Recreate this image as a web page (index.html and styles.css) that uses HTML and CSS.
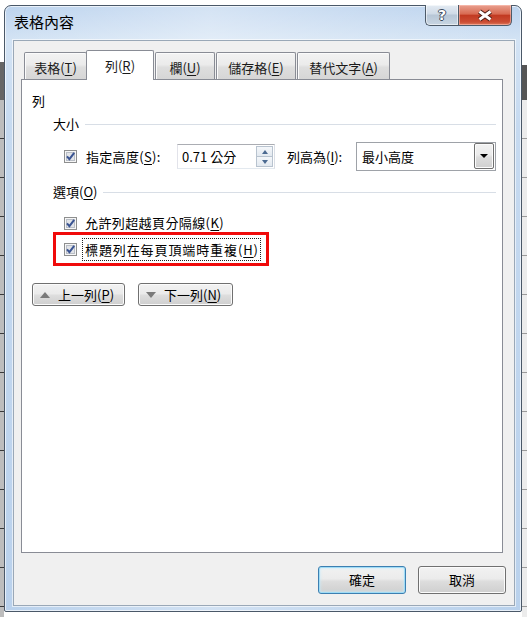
FILE: index.html
```html
<!DOCTYPE html>
<html lang="zh-Hant">
<head>
<meta charset="utf-8">
<title>表格內容</title>
<link rel="stylesheet" href="styles.css">
</head>
<body>
<div class="win">
  <div class="titlebar">
    <span class="title">表格內容</span>
    <div class="caps">
      <div class="cap help">?</div>
      <div class="cap close">
        <svg width="18" height="13" viewBox="0 0 18 13">
          <path d="M3.5 2.5 L14.5 10.5 M14.5 2.5 L3.5 10.5" stroke="#4b1e16" stroke-width="4.8" fill="none"/>
          <path d="M3.5 2.5 L14.5 10.5 M14.5 2.5 L3.5 10.5" stroke="#ffffff" stroke-width="2.8" fill="none"/>
        </svg>
      </div>
    </div>
  </div>
  <div class="client">
    <div class="tabs">
      <div class="tab t1">表格(<u>T</u>)</div>
      <div class="tab sel t2">列(<u>R</u>)</div>
      <div class="tab t3">欄(<u>U</u>)</div>
      <div class="tab t4">儲存格(<u>E</u>)</div>
      <div class="tab t5">替代文字(<u>A</u>)</div>
    </div>
    <div class="panel">
      <div class="ptitle">列</div>
      <div class="group">大小</div>
      <div class="row1">
        <svg class="cb" width="13" height="13" viewBox="0 0 13 13"><rect x="0.5" y="0.5" width="12" height="12" fill="#f6f6f6" stroke="#8e8f8f"/><rect x="2.5" y="2.5" width="8" height="8" fill="#e2e4e8" stroke="#b9bec6"/><path d="M3 6.3 L5.4 9.2 L10.2 2.8" fill="none" stroke="#3a5492" stroke-width="2"/></svg>
        <span class="lbl1">指定高度(<u>S</u>):</span>
        <div class="spin">
          <span>0.71 公分</span>
          <div class="spinbtns">
            <div class="sb"><i class="up"></i></div>
            <div class="sb"><i class="down"></i></div>
          </div>
        </div>
        <span class="lbl2">列高為(<u>I</u>):</span>
        <div class="combo">
          <span>最小高度</span>
          <div class="drop"><i></i></div>
        </div>
      </div>
      <div class="group g2">選項(<u>O</u>)</div>
      <div class="chkrow">
        <svg class="cb" width="13" height="13" viewBox="0 0 13 13"><rect x="0.5" y="0.5" width="12" height="12" fill="#f6f6f6" stroke="#8e8f8f"/><rect x="2.5" y="2.5" width="8" height="8" fill="#e2e4e8" stroke="#b9bec6"/><path d="M3 6.3 L5.4 9.2 L10.2 2.8" fill="none" stroke="#3a5492" stroke-width="2"/></svg>
        <span class="cbtext">允許列超越頁分隔線(<u>K</u>)</span>
      </div>
      <div class="hl">
        <svg class="cb" width="13" height="13" viewBox="0 0 13 13"><rect x="0.5" y="0.5" width="12" height="12" fill="#f6f6f6" stroke="#8e8f8f"/><rect x="2.5" y="2.5" width="8" height="8" fill="#e2e4e8" stroke="#b9bec6"/><path d="M3 6.3 L5.4 9.2 L10.2 2.8" fill="none" stroke="#3a5492" stroke-width="2"/></svg>
        <span class="focus">標題列在每頁頂端時重複(<u>H</u>)</span>
      </div>
      <div class="navbtns">
        <div class="btn nav prev"><i class="tri-up"></i><span>上一列(<u>P</u>)</span></div>
        <div class="btn nav next"><i class="tri-down"></i><span>下一列(<u>N</u>)</span></div>
      </div>
    </div>
    <div class="footer">
      <div class="btn act def">確定</div>
      <div class="btn act">取消</div>
    </div>
  </div>
</div>
</body>
</html>
```

FILE: styles.css
```css
html, body {
  margin: 0;
  padding: 0;
}
body {
  width: 527px;
  height: 617px;
  overflow: hidden;
  font-family: "Noto Sans CJK TC", "Noto Sans", sans-serif;
  font-size: 13px;
  color: #000;
  background:
    linear-gradient(#666666, #666666) 0 62px / 4px 38px no-repeat,
    repeating-linear-gradient(#bdbdbd 0 38px, #3a3a3a 38px 39px) 0 100px / 4px 517px no-repeat,
    linear-gradient(#555555, #555555) 522px 65px / 5px 35px no-repeat,
    repeating-linear-gradient(#ececec 0 38px, #9a9a9a 38px 39px) 522px 100px / 5px 517px no-repeat,
    #ffffff;
}
u { text-decoration: underline; text-underline-offset: 2px; }

.win {
  margin: 5px 0 0 4px;
  width: 518px;
  height: 607px;
  box-sizing: border-box;
  border: 1px solid #4a5868;
  border-radius: 7px 7px 2px 2px;
  padding: 0 6px 5px 8px;
  display: flex;
  flex-direction: column;
  background:
    linear-gradient(90deg, rgba(255,255,255,0) 0, rgba(255,255,255,0.35) 40%, rgba(255,255,255,0.15) 70%, rgba(255,255,255,0) 100%),
    linear-gradient(180deg, #bcd3ee 0, #d3e3f4 34px, #c6daf0 120px, #b9d1ec 100%);
  box-shadow: inset 0 0 0 1px rgba(255,255,255,0.65);
}

.titlebar {
  height: 34px;
  display: flex;
  justify-content: space-between;
  align-items: flex-start;
}
.title {
  margin-top: 7px;
  padding-left: 1px;
  font-size: 15px;
  line-height: 18px;
  color: #000;
}
.caps {
  display: flex;
  margin-top: -1px;
  margin-right: 3px;
}
.cap {
  height: 21px;
  box-sizing: border-box;
  border: 1px solid #4d5a68;
  border-top: none;
  display: flex;
  align-items: center;
  justify-content: center;
}
.help {
  width: 33px;
  border-radius: 0 0 0 5px;
  border-right: none;
  background: linear-gradient(180deg, #e4ebf3 0, #cfdae6 45%, #b7c6d6 50%, #c8d5e2 100%);
  box-shadow: inset 0 0 0 1px rgba(255,255,255,0.55);
  font-family: "DejaVu Sans", sans-serif;
  font-weight: bold;
  font-size: 14px;
  color: #ffffff;
  text-shadow: 1px 0 0 #3c4b5c, -1px 0 0 #3c4b5c, 0 1px 0 #3c4b5c, 0 -1px 0 #3c4b5c;
}
.close {
  width: 54px;
  border-radius: 0 0 5px 0;
  background: linear-gradient(180deg, #e9a190 0, #d86a52 45%, #c23a22 52%, #cc4d34 85%, #dd7a5c 100%);
  box-shadow: inset 0 0 0 1px rgba(255,200,190,0.55);
}

.client {
  flex: 1;
  border: 1px solid #9aa8b7;
  background: #f0f0f0;
  padding: 9px 11px 11px 7px;
  display: flex;
  flex-direction: column;
  box-shadow: 0 0 0 1px rgba(255,255,255,0.6);
}

.tabs {
  display: flex;
  align-items: flex-end;
  height: 30px;
  margin-bottom: -1px;
  position: relative;
  z-index: 1;
}
.tab {
  height: 27px;
  box-sizing: border-box;
  margin-bottom: 1px;
  border: 1px solid #898c95;
  border-bottom: none;
  border-radius: 2px 2px 0 0;
  background: linear-gradient(180deg, #f3f3f3 0, #ebebeb 45%, #dedede 55%, #d6d6d6 100%);
  box-shadow: inset 0 1px 0 #fbfbfb, inset 1px 0 0 #fbfbfb;
  display: flex;
  align-items: center;
  justify-content: center;
  padding-top: 3px;
  line-height: 18px;
  color: #1a1a1a;
}
.tab.sel {
  height: 30px;
  margin-bottom: 0;
  background: #ffffff;
  box-shadow: none;
  padding-top: 0;
}
.t1 { width: 63px; margin-left: 3px; }
.t2 { width: 68px; margin-left: -1px; }
.t3 { width: 60px; margin-left: 1px; }
.t4 { width: 80px; margin-left: 1px; }
.t5 { width: 93px; margin-left: 1px; }

.panel {
  height: 474px;
  box-sizing: border-box;
  border: 1px solid #898c95;
  background: #ffffff;
  padding: 12px 6px 0 10px;
  display: flex;
  flex-direction: column;
  align-items: flex-start;
}
.ptitle {
  line-height: 18px;
  height: 18px;
}
.group {
  align-self: stretch;
  margin-left: 21px;
  margin-top: 5px;
  height: 18px;
  line-height: 18px;
  display: flex;
  align-items: center;
}
.group::after {
  content: "";
  flex: 1;
  height: 1px;
  background: #d8dee6;
  margin-left: 6px;
}
.group.g2 { margin-top: 12px; }

.cb { flex: none; display: block; }

.row1 {
  margin-top: 9px;
  margin-left: 32px;
  height: 29px;
  display: flex;
  align-items: center;
}
.lbl1 {
  width: 91px;
  margin-left: 9px;
  line-height: 18px;
  letter-spacing: 0.3px;
}
.spin {
  width: 98px;
  height: 25px;
  box-sizing: border-box;
  border: 1px solid #abadb3;
  border-color: #abadb3 #dbdfe6 #e3e9ef #e2e3ea;
  display: flex;
  align-items: center;
  justify-content: space-between;
  padding: 0 1px 0 4px;
  background: #fff;
}
.spinbtns {
  display: flex;
  flex-direction: column;
  width: 17px;
  height: 21px;
}
.sb {
  flex: 1;
  border: 1px solid #b8c3cf;
  background: linear-gradient(180deg, #f4f7fa 0, #e3e9f0 100%);
  display: flex;
  align-items: center;
  justify-content: center;
}
.sb + .sb { border-top: none; }
.sb i {
  width: 0;
  height: 0;
  border-left: 3px solid transparent;
  border-right: 3px solid transparent;
}
.sb i.up { border-bottom: 4px solid #4b6a91; }
.sb i.down { border-top: 4px solid #4b6a91; }

.lbl2 {
  margin-left: 12px;
  width: 69px;
  line-height: 18px;
}
.combo {
  width: 140px;
  height: 29px;
  box-sizing: border-box;
  border: 1px solid #9ea2a8;
  background: #fff;
  display: flex;
  align-items: flex-start;
  justify-content: space-between;
  padding: 0 1px 0 5px;
}
.combo span {
  line-height: 27px;
}
.drop {
  width: 20px;
  height: 26px;
  box-sizing: border-box;
  border: 1px solid #707070;
  border-radius: 2px;
  background: linear-gradient(180deg, #f2f2f2 0, #ebebeb 45%, #dddddd 55%, #cfcfcf 100%);
  box-shadow: inset 0 0 0 1px #fbfbfb;
  display: flex;
  align-items: center;
  justify-content: center;
}
.drop i {
  width: 0;
  height: 0;
  border-left: 4px solid transparent;
  border-right: 4px solid transparent;
  border-top: 4px solid #000;
}

.chkrow {
  margin-top: 13px;
  margin-left: 32px;
  height: 18px;
  display: flex;
  align-items: center;
}
.cbtext {
  margin-left: 8px;
  line-height: 18px;
  letter-spacing: 0.4px;
}

.hl {
  margin-left: 21px;
  height: 34px;
  box-sizing: border-box;
  border: 3px solid #f00a0a;
  padding: 0 5px 0 8px;
  display: flex;
  align-items: center;
}
.focus {
  margin-left: 5px;
  height: 23px;
  box-sizing: border-box;
  border: 1px dotted #222;
  padding: 0 1px 0 2px;
  line-height: 21px;
  letter-spacing: 0.9px;
}

.navbtns {
  margin-top: 17px;
  display: flex;
  gap: 13px;
}
.btn {
  box-sizing: border-box;
  border: 1px solid #707070;
  border-radius: 3px;
  background: linear-gradient(180deg, #f2f2f2 0, #ebebeb 45%, #dddddd 55%, #cfcfcf 100%);
  box-shadow: inset 0 0 0 1px #fbfbfb;
  display: flex;
  align-items: center;
  line-height: 18px;
  color: #000;
}
.nav {
  height: 23px;
  padding-left: 7px;
  gap: 8px;
}
.prev { width: 93px; }
.next { width: 95px; }
.tri-up, .tri-down {
  width: 0;
  height: 0;
  border-left: 5px solid transparent;
  border-right: 5px solid transparent;
}
.tri-up { border-bottom: 6px solid #7a7a7a; }
.tri-down { border-top: 6px solid #7a7a7a; }

.footer {
  margin-top: 13px;
  margin-right: -3px;
  display: flex;
  justify-content: flex-end;
  gap: 12px;
}
.act {
  width: 88px;
  height: 28px;
  justify-content: center;
}
.def {
  border-color: #3c7fb1;
  box-shadow: inset 0 0 0 1px #9fdcf6, inset 0 0 3px 1px #c6ecfb;
}
```
